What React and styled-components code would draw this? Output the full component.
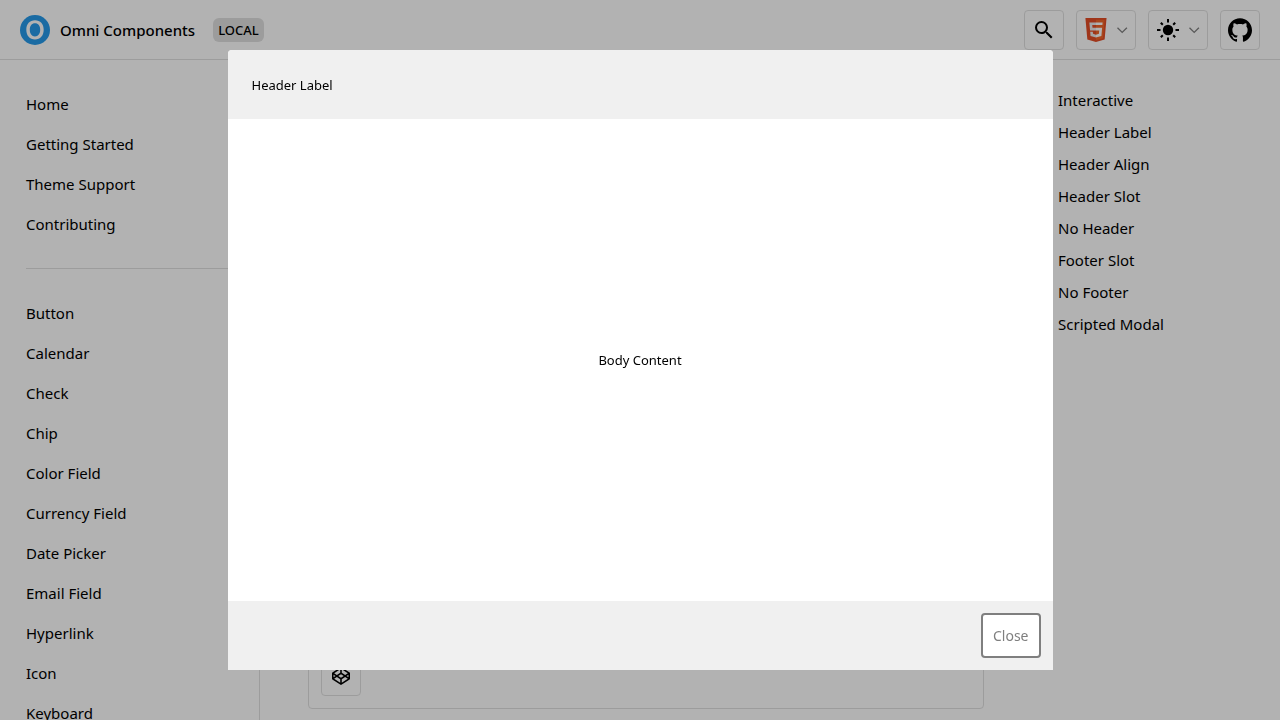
import React from "react";
import styled, { createGlobalStyle } from "styled-components";
import { MdSearch } from "react-icons/md";
import { SiGithub } from "react-icons/si";
import { FaCodepen } from "react-icons/fa";

const line = "#e0e0e0";

const GlobalStyle = createGlobalStyle`
  *, *::before, *::after { box-sizing: border-box; }
  body {
    margin: 0;
    background: #fff;
    color: #000;
    font-family: "Noto Sans", "Open Sans", sans-serif;
    font-size: 15px;
    line-height: 20px;
  }
  button { font-family: inherit; }
`;

const Page = styled.div`
  display: flex;
  flex-direction: column;
  height: 100vh;
  overflow: hidden;
`;

const TopBar = styled.header`
  display: flex;
  flex: none;
  align-items: center;
  justify-content: space-between;
  height: 60px;
  padding: 0 20px;
  border-bottom: 1px solid ${line};
`;

const Brand = styled.a`
  display: flex;
  align-items: center;
  gap: 10px;
  color: inherit;
  font-weight: 500;
  text-decoration: none;
`;

const BrandGroup = styled.div`
  display: flex;
  align-items: center;
  gap: 18px;
`;

const VersionBadge = styled.span`
  padding: 2px 5px;
  border-radius: 6px;
  background: ${line};
  font-size: 13px;
  font-weight: 500;
`;

const Tools = styled.div`
  display: flex;
  gap: 12px;
`;

const ToolButton = styled.button`
  display: flex;
  align-items: center;
  justify-content: ${(p) => (p.$menu ? "space-between" : "center")};
  width: ${(p) => (p.$menu ? "60px" : "40px")};
  height: 40px;
  padding: 0 ${(p) => (p.$menu ? "7px" : "0")};
  border: 1px solid ${line};
  border-radius: 4px;
  background: #fff;
  color: #000;
`;

const Columns = styled.div`
  display: flex;
  flex: 1;
  min-height: 0;
`;

const SideNav = styled.nav`
  flex: none;
  width: 260px;
  padding: 24px 26px;
  border-right: 1px solid ${line};
  overflow: hidden;
`;

const Toc = styled.nav`
  flex: none;
  width: 248px;
  padding: 24px 26px;
`;

const LinkList = styled.ul`
  margin: 0;
  padding: 0;
  list-style: none;
`;

const LinkItem = styled.li`
  display: flex;
  align-items: center;
  height: ${(p) => p.$height};
`;

const NavLink = styled.a`
  color: inherit;
  text-decoration: none;
`;

const Divider = styled.hr`
  margin: 24px 0;
  border: 0;
  border-top: 1px solid ${line};
`;

const Main = styled.main`
  display: flex;
  flex: 1;
  min-width: 0;
  padding: 48px 48px 11px;
`;

const DemoCard = styled.section`
  display: flex;
  flex: 1;
  align-items: flex-end;
  padding: 12px;
  border: 1px solid ${line};
  border-radius: 4px;
`;

const Backdrop = styled.div`
  position: fixed;
  inset: 0;
  display: flex;
  justify-content: center;
  padding: 50px 24px;
  background: rgba(0, 0, 0, 0.3);
`;

const Dialog = styled.section`
  display: flex;
  flex-direction: column;
  width: 100%;
  max-width: 825px;
  border-radius: 4px 4px 0 0;
  background: #fff;
  overflow: hidden;
  font-size: 13px;
`;

const DialogHeader = styled.header`
  display: flex;
  align-items: center;
  height: 69px;
  padding: 0 24px;
  background: #f0f0f0;
`;

const DialogTitle = styled.h2`
  margin: 0;
  font-size: 13px;
  font-weight: 400;
`;

const DialogBody = styled.div`
  display: flex;
  flex: 1;
  align-items: center;
  justify-content: center;
`;

const DialogFooter = styled.footer`
  display: flex;
  justify-content: flex-end;
  padding: 12px;
  background: #f0f0f0;
`;

const CloseButton = styled.button`
  height: 45px;
  padding: 0 10px;
  border: 2px solid #7f7f7f;
  border-radius: 4px;
  background: #fff;
  color: #7f7f7f;
  font-size: 14px;
`;

const Logo = () => (
  <svg width="30" height="30" viewBox="0 0 30 30" aria-hidden="true">
    <circle cx="15" cy="15" r="15" fill="#269aea" />
    <path
      fill="#fff"
      fillRule="evenodd"
      d="M15 5.200c5.300 0 8.700 3.700 8.700 9.600s-3.400 9.700-8.700 9.700-8.700-3.800-8.700-9.700 3.400-9.600 8.700-9.600zM15 8.300c-3.200 0-5.200 2.500-5.200 6.500s2 6.600 5.200 6.600 5.200-2.600 5.200-6.600-2-6.500-5.200-6.500z"
    />
  </svg>
);

const Html5 = () => (
  <svg width="24" height="24" viewBox="0 0 512 512" aria-hidden="true">
    <path fill="#e44d26" d="M71 460 30 0h451l-41 460-185 52z" />
    <path fill="#f16529" d="m256 472 149-41 35-394H256z" />
    <path fill="#ebebeb" d="M256 208h-75l-5-58h80V94H114l1 15 14 156h127zm0 147h-1l-63-17-4-45h-56l7 89 116 32h1z" />
    <path fill="#fff" d="M255 208v57h70l-7 73-63 17v59l116-32 1-10 13-149 2-15zm0-114v56h137l1-12 3-29 1-15z" />
  </svg>
);

const Sun = () => (
  <svg width="24" height="24" viewBox="0 0 24 24" fill="none" stroke="#000" strokeWidth="2" aria-hidden="true">
    <circle cx="12" cy="12" r="5.200" fill="#000" stroke="none" />
    <path d="M12 1v3.500M12 19.500V23M1 12h3.500M19.500 12H23M4.800 4.800l2 2M17.200 17.200l2 2M4.800 19.200l2-2M17.200 6.800l2-2" />
  </svg>
);

const Chevron = () => (
  <svg width="12" height="12" viewBox="0 0 12 12" fill="none" stroke="#808080" strokeWidth="1.300" aria-hidden="true">
    <path d="m1.500 3.700 4.700 4.700 4.700-4.700" />
  </svg>
);

const guides = ["Home", "Getting Started", "Theme Support", "Contributing"];
const components = [
  "Button", "Calendar", "Check", "Chip", "Color Field", "Currency Field",
  "Date Picker", "Email Field", "Hyperlink", "Icon", "Keyboard",
];
const sections = [
  "Interactive", "Header Label", "Header Align", "Header Slot",
  "No Header", "Footer Slot", "No Footer", "Scripted Modal",
];

const Links = ({ items, height }) => (
  <LinkList>
    {items.map((label) => (
      <LinkItem key={label} $height={height}>
        <NavLink href={"#" + label.toLowerCase().replace(/ /g, "-")}>{label}</NavLink>
      </LinkItem>
    ))}
  </LinkList>
);

export default function App() {
  const [open, setOpen] = React.useState(true);
  return (
    <>
      <GlobalStyle />
      <Page>
        <TopBar>
          <BrandGroup>
            <Brand href="#home"><Logo />Omni Components</Brand>
            <VersionBadge>LOCAL</VersionBadge>
          </BrandGroup>
          <Tools>
            <ToolButton aria-label="Search"><MdSearch size={24} /></ToolButton>
            <ToolButton $menu aria-label="Framework"><Html5 /><Chevron /></ToolButton>
            <ToolButton $menu aria-label="Theme"><Sun /><Chevron /></ToolButton>
            <ToolButton aria-label="GitHub"><SiGithub size={24} /></ToolButton>
          </Tools>
        </TopBar>
        <Columns>
          <SideNav aria-label="Components">
            <Links items={guides} height="40px" />
            <Divider />
            <Links items={components} height="40px" />
          </SideNav>
          <Main>
            <DemoCard>
              <ToolButton aria-label="CodePen" onClick={() => setOpen(true)}><FaCodepen size={18} /></ToolButton>
            </DemoCard>
          </Main>
          <Toc aria-label="Sections"><Links items={sections} height="32px" /></Toc>
        </Columns>
      </Page>
      {open && (
        <Backdrop>
          <Dialog role="dialog" aria-modal="true" aria-labelledby="dialog-title">
            <DialogHeader><DialogTitle id="dialog-title">Header Label</DialogTitle></DialogHeader>
            <DialogBody>Body Content</DialogBody>
            <DialogFooter><CloseButton onClick={() => setOpen(false)}>Close</CloseButton></DialogFooter>
          </Dialog>
        </Backdrop>
      )}
    </>
  );
}
